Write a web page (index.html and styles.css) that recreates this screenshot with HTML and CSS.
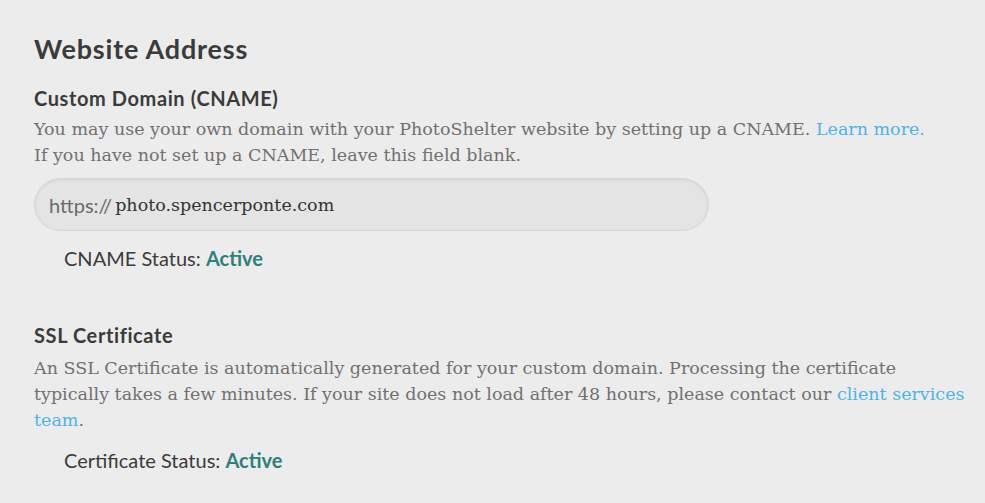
FILE: index.html
```html
<!DOCTYPE html>
<html>
<head>
<meta charset="utf-8">
<link rel="stylesheet" href="styles.css">
</head>
<body>
<main class="page">
  <h1 class="title">Website Address</h1>
  <section class="group">
    <h2 class="label">Custom Domain (CNAME)</h2>
    <p class="desc">You may use your own domain with your PhotoShelter website by setting up a CNAME. <a class="link" href="#">Learn more.</a><br>If you have not set up a CNAME, leave this field blank.</p>
    <div class="field"><span class="prefix">https://</span><span class="value">photo.spencerponte.com</span></div>
    <p class="status">CNAME Status: <strong class="active">Active</strong></p>
  </section>
  <section class="group ssl">
    <h2 class="label">SSL Certificate</h2>
    <p class="desc">An SSL Certificate is automatically generated for your custom domain. Processing the certificate typically takes a few minutes. If your site does not load after 48 hours, please contact our <a class="link" href="#">client services team</a>.</p>
    <p class="status">Certificate Status: <strong class="active">Active</strong></p>
  </section>
</main>
</body>
</html>
```
FILE: styles.css
```css
html, body {
  margin: 0;
  padding: 0;
  background: #ececec;
}
.page {
  padding: 30px 0 0 34px;
  width: 940px;
  font-family: Lato, "Open Sans", sans-serif;
  color: #3b3b3b;
}
.title {
  margin: 0;
  font-size: 27px;
  line-height: 38px;
  font-weight: 700;
  letter-spacing: 0.8px;
}
.group {
  margin-top: 16px;
}
.label {
  margin: 0;
  font-size: 20px;
  line-height: 28px;
  font-weight: 700;
  letter-spacing: 0.6px;
}
.desc {
  margin: 4px 0 0 0;
  font-family: "DejaVu Serif", serif;
  font-size: 17.5px;
  line-height: 26px;
  color: #727070;
}
.link {
  color: #4fb3ea;
  text-decoration: none;
}
.field {
  margin-top: 10px;
  width: 659px;
  height: 51px;
  border: 1px solid #d6d6d6;
  border-radius: 27px;
  background: #e4e4e4;
  box-shadow: inset 0 1px 3px rgba(0,0,0,0.08);
  display: flex;
  align-items: center;
  padding-left: 14px;
  font-size: 20px;
}
.prefix {
  color: #6a6a6a;
  margin-right: 3px;
}
.value {
  font-family: "DejaVu Serif", serif;
  font-size: 17.5px;
  color: #333;
}
.status {
  margin: 13px 0 0 30px;
  font-size: 20px;
  line-height: 28px;
}
.active {
  color: #2f807b;
  font-weight: 700;
}
.ssl {
  margin-top: 49px;
}
.ssl .desc {
  margin-top: 6px;
}
```
